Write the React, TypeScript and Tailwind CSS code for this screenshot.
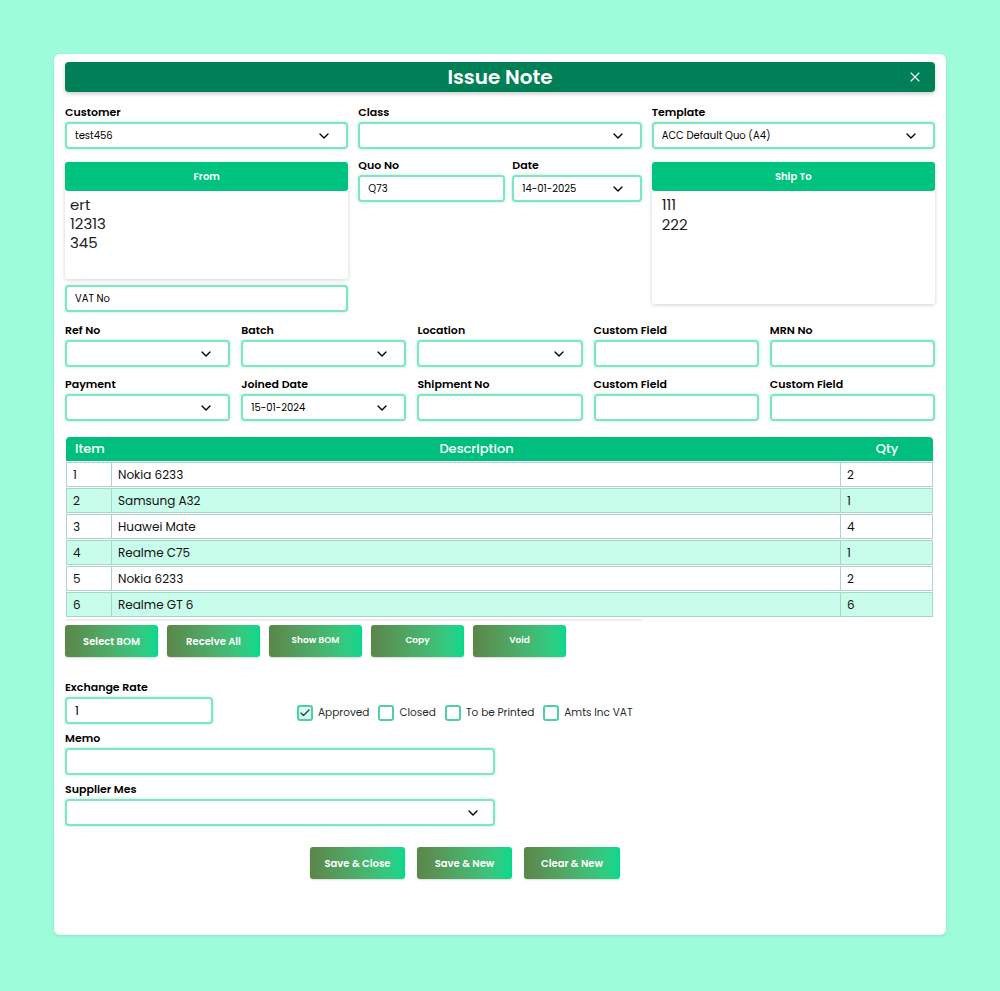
import React from 'react';
import { ChevronDown, X, Check } from 'lucide-react';

const font = { fontFamily: 'Poppins, Inter, "Noto Sans", sans-serif' };

const inputCls =
  'h-[27px] w-full rounded-[4px] border-2 border-[#7fe6c3] bg-white shadow-[0_0_3px_rgba(16,185,129,0.35)] flex items-center px-[8px] text-[10px] text-black';

const Label: React.FC<{ children: React.ReactNode }> = ({ children }) => (
  <div className="text-[11px] font-semibold text-black leading-[14px] mb-[3px]">{children}</div>
);

const Field: React.FC<{ value?: string; select?: boolean; className?: string }> = ({ value, select, className }) => (
  <div className={`${inputCls} ${className || ''}`}>
    <span className="flex-1 truncate">{value}</span>
    {select && <ChevronDown className="w-[16px] h-[16px] mr-[6px]" strokeWidth={2} />}
  </div>
);

const Btn: React.FC<{ children: React.ReactNode; small?: boolean; className?: string }> = ({ children, small, className }) => (
  <button
    className={`h-[32px] rounded-[3px] bg-linear-to-r from-[#5a8649] to-[#02d98d] text-white font-semibold shadow-[0_1px_2px_rgba(0,0,0,0.15)] ${
      small ? 'text-[9px]' : 'text-[10px]'
    } ${className || ''}`}
  >
    {children}
  </button>
);

const Box: React.FC<{ checked?: boolean; label: string }> = ({ checked, label }) => (
  <label className="flex items-center gap-[5px] text-[10.5px] text-[#1f2d2a]">
    <span
      className={`w-[16px] h-[16px] rounded-[3px] border-2 border-[#4fcfa5] flex items-center justify-center ${
        checked ? 'bg-[#d9fbef]' : 'bg-white'
      }`}
    >
      {checked && <Check className="w-[12px] h-[12px] text-[#0f4a3b]" strokeWidth={2.5} />}
    </span>
    {label}
  </label>
);

const rows = [
  { n: '1', d: 'Nokia 6233', q: '2' },
  { n: '2', d: 'Samsung A32', q: '1' },
  { n: '3', d: 'Huawei Mate', q: '4' },
  { n: '4', d: 'Realme C75', q: '1' },
  { n: '5', d: 'Nokia 6233', q: '2' },
  { n: '6', d: 'Realme GT 6', q: '6' },
];

export default function App() {
  return (
    <div className="min-h-[991px] w-full bg-[#9dfddb] pt-[54px] pb-[56px]" style={font}>
      <div className="mx-[54px] h-[881px] rounded-[6px] bg-white shadow-[0_1px_3px_rgba(0,0,0,0.12)] px-[11px] pt-[8px]">
        {/* header */}
        <div className="relative h-[30px] rounded-[4px] bg-[#017f56] shadow-[0_2px_4px_rgba(0,0,0,0.2)] flex items-center justify-center">
          <h1 className="text-[20px] font-semibold text-white">Issue Note</h1>
          <X className="absolute right-[12px] top-[7px] w-[16px] h-[16px] text-white" strokeWidth={1.6} />
        </div>

        {/* top section */}
        <div className="grid grid-cols-3 gap-x-[10px] mt-[13px]">
          <div>
            <Label>Customer</Label>
            <Field value="test456" select />
          </div>
          <div>
            <Label>Class</Label>
            <Field select />
          </div>
          <div>
            <Label>Template</Label>
            <Field value="ACC Default Quo (A4)" select />
          </div>

          <div className="mt-[13px]">
            <div className="rounded-[3px] shadow-[0_1px_4px_rgba(0,0,0,0.18)] bg-white">
              <div className="h-[29px] rounded-[3px] bg-[#00c380] flex items-center justify-center text-[10px] font-semibold text-white">From</div>
              <div className="h-[88px] px-[5px] pt-[4px] text-[15px] leading-[19px] text-[#222]">
                <div>ert</div>
                <div>12313</div>
                <div>345</div>
              </div>
            </div>
            <Field value="VAT No" className="mt-[6px] h-[27px]" />
          </div>

          <div className="mt-[9px] flex gap-[7px]">
            <div className="w-[147px]">
              <Label>Quo No</Label>
              <Field value="Q73" />
            </div>
            <div className="flex-1">
              <Label>Date</Label>
              <Field value="14-01-2025" select />
            </div>
          </div>

          <div className="mt-[13px]">
            <div className="rounded-[3px] shadow-[0_1px_4px_rgba(0,0,0,0.18)] bg-white">
              <div className="h-[29px] rounded-[3px] bg-[#00c380] flex items-center justify-center text-[10px] font-semibold text-white">Ship To</div>
              <div className="h-[113px] px-[10px] pt-[4px] text-[15px] leading-[20px] text-[#222]">
                <div>111</div>
                <div>222</div>
              </div>
            </div>
          </div>
        </div>

        {/* five-column rows */}
        <div className="grid grid-cols-5 gap-x-[11px] gap-y-[10px] mt-[11px]">
          <div>
            <Label>Ref No</Label>
            <Field select />
          </div>
          <div>
            <Label>Batch</Label>
            <Field select />
          </div>
          <div>
            <Label>Location</Label>
            <Field select />
          </div>
          <div>
            <Label>Custom Field</Label>
            <Field />
          </div>
          <div>
            <Label>MRN No</Label>
            <Field />
          </div>
          <div>
            <Label>Payment</Label>
            <Field select />
          </div>
          <div>
            <Label>Joined Date</Label>
            <Field value="15-01-2024" select />
          </div>
          <div>
            <Label>Shipment No</Label>
            <Field />
          </div>
          <div>
            <Label>Custom Field</Label>
            <Field />
          </div>
          <div>
            <Label>Custom Field</Label>
            <Field />
          </div>
        </div>

        {/* table */}
        <div className="mt-[16px] pl-[1px] pr-[2px]">
          <div className="h-[24px] rounded-t-[4px] bg-[#00bf7e] flex items-center text-[13px] font-medium text-white">
            <div className="w-[46px] pl-[9px]">Item</div>
            <div className="flex-1 text-center">Description</div>
            <div className="w-[92px] text-center">Qty</div>
          </div>
          <div className="flex flex-col gap-[1px] mt-[1px]">
            {rows.map((r, i) => (
              <div
                key={i}
                className={`h-[25px] flex border border-[#a9d6c9] text-[12px] text-[#111] ${i % 2 ? 'bg-[#c8fdeb]' : 'bg-white'}`}
              >
                <div className="w-[45px] pl-[6px] flex items-center border-r border-[#a9d6c9]">{r.n}</div>
                <div className="flex-1 pl-[6px] flex items-center border-r border-[#a9d6c9]">{r.d}</div>
                <div className="w-[91px] pl-[6px] flex items-center">{r.q}</div>
              </div>
            ))}
          </div>
          <div className="h-[2px] w-[576px] bg-[#eceeee] mt-[2px]" />
        </div>

        <div className="flex gap-[9px] mt-[4px]">
          <Btn className="w-[93px]">Select BOM</Btn>
          <Btn className="w-[93px]">Receive All</Btn>
          <Btn small className="w-[93px]">Show BOM</Btn>
          <Btn small className="w-[93px]">Copy</Btn>
          <Btn small className="w-[93px]">Void</Btn>
        </div>

        {/* lower form */}
        <div className="mt-[23px] flex">
          <div className="w-[148px]">
            <Label>Exchange Rate</Label>
            <Field value="1" className="text-[12px] px-[3px]" />
          </div>
          <div className="flex items-end gap-[9px] ml-[84px] pb-[3px] mt-[16px]">
            <Box checked label="Approved" />
            <Box label="Closed" />
            <Box label="To be Printed" />
            <Box label="Amts Inc VAT" />
          </div>
        </div>

        <div className="w-[430px] mt-[7px]">
          <Label>Memo</Label>
          <Field />
        </div>
        <div className="w-[430px] mt-[7px]">
          <Label>Supplier Mes</Label>
          <Field select className="pr-[6px]" />
        </div>

        <div className="flex gap-[12px] mt-[21px] ml-[245px]">
          <Btn className="w-[95px] text-[10.5px]">Save &amp; Close</Btn>
          <Btn className="w-[95px] text-[10.5px]">Save &amp; New</Btn>
          <Btn className="w-[96px] text-[10.5px]">Clear &amp; New</Btn>
        </div>
      </div>
    </div>
  );
}
